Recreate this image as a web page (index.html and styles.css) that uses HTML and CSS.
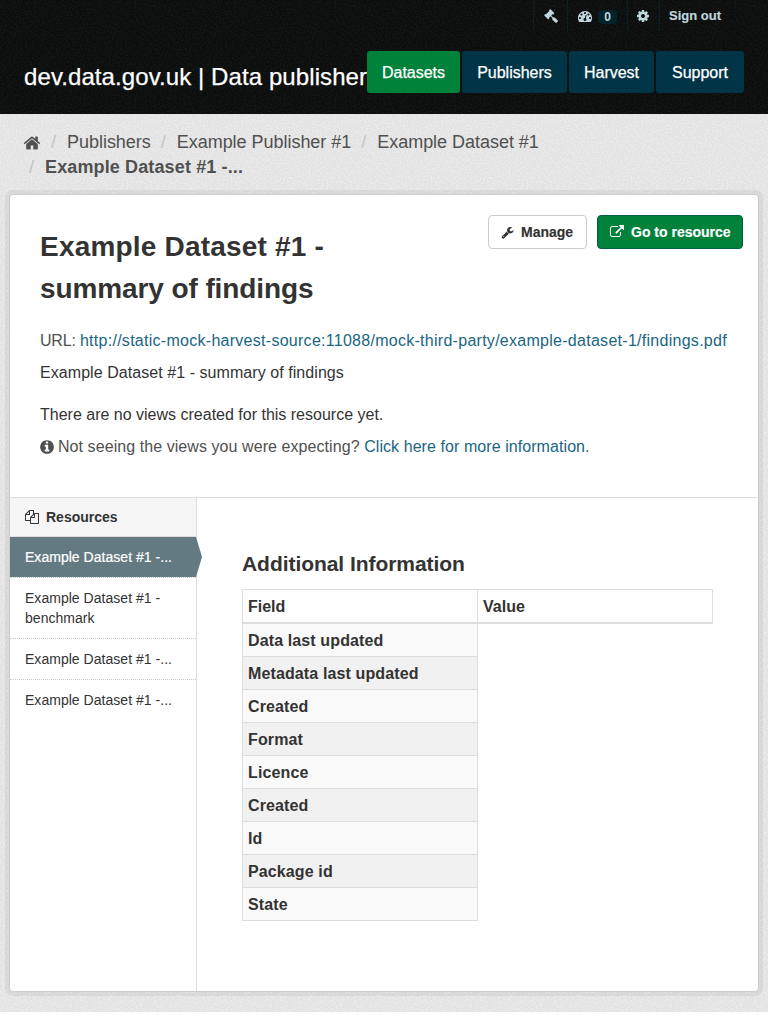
FILE: index.html
```html
<!DOCTYPE html>
<html lang="en">
<head>
<meta charset="utf-8">
<title>Example Dataset #1 - summary of findings</title>
<link rel="stylesheet" href="styles.css">
</head>
<body>
<svg class="defs" aria-hidden="true">
  <symbol id="gavel" viewBox="0 0 1792 1792"><path d="M1771 1536q0 53-37 90l-107 108q-39 37-91 37-53 0-90-37l-363-364q-38-36-38-90 0-53 43-96l-256-256-126 126q-14 14-34 14t-34-14q2 2 12.5 12t12.5 13 10 11.5 10 13.5 6 13.5 5.5 16.5 1.5 18q0 38-28 68-3 3-16.5 18t-19 20.5-18.5 16.5-22 15.5-22 9-26 4.5q-40 0-68-28l-408-408q-28-28-28-68 0-13 4.5-26t9-22 15.500-22 16.500-18.500 20.500-19 18-16.500q30-28 68-28 10 0 18 1.500t16.500 5.500 13.500 6 13.500 10 11.500 10 13 12.500 12 12.500q-14-14-14-34t14-34l348-348q14-14 34-14t34 14q-2-2-12.500-12t-12.500-13-10-11.500-10-13.500-6-13.500-5.500-16.500-1.500-18q0-38 28-68 3-3 16.500-18t19-20.500 18.500-16.500 22-15.500 22-9 26-4.500q40 0 68 28l408 408q28 28 28 68 0 13-4.500 26t-9 22-15.500 22-16.500 18.500-20.500 19-18 16.500q-30 28-68 28-10 0-18-1.500t-16.500-5.500-13.500-6-13.500-10-11.500-10-13-12.500-12-12.500q14 14 14 34t-14 34l-126 126 256 256q43-43 96-43 52 0 91 37l363 363q37 39 37 91z"/></symbol>
  <symbol id="gauge" viewBox="0 0 1792 1792"><path d="M384 1152q0-53-37.500-90.500t-90.500-37.500-90.500 37.500-37.500 90.500 37.500 90.500 90.500 37.500 90.500-37.500 37.500-90.500zm192-448q0-53-37.500-90.500t-90.500-37.500-90.500 37.500-37.500 90.500 37.500 90.500 90.500 37.500 90.500-37.500 37.500-90.500zm428 481l101-382q6-26-7.500-48.500t-38.500-29.500-48 6.500-30 39.500l-101 382q-60 5-107 43.500t-63 98.500q-20 77 20 146t117 89 146-20 89-117q16-60-6-117t-72-91zm660-33q0-53-37.500-90.500t-90.500-37.500-90.500 37.500-37.500 90.500 37.500 90.500 90.500 37.500 90.500-37.500 37.500-90.500zm-640-640q0-53-37.500-90.500t-90.500-37.500-90.500 37.500-37.500 90.500 37.500 90.500 90.500 37.500 90.500-37.500 37.500-90.500zm448 192q0-53-37.500-90.500t-90.500-37.500-90.500 37.500-37.500 90.500 37.500 90.500 90.500 37.500 90.500-37.500 37.500-90.500zm320 448q0 261-141 483-19 29-54 29h-1402q-35 0-54-29-141-221-141-483 0-182 71-348t191-286 286-191 348-71 348 71 286 191 191 286 71 348z"/></symbol>
  <symbol id="cog" viewBox="0 0 1792 1792"><path d="M1152 896q0-106-75-181t-181-75-181 75-75 181 75 181 181 75 181-75 75-181zm512-109v222q0 12-8 23t-20 13l-185 28q-19 54-39 91 35 50 107 138 10 12 10 25t-9 23q-27 37-99 108t-94 71q-12 0-26-9l-138-108q-44 23-91 38-16 136-29 186-7 28-36 28h-222q-14 0-24.500-8.500t-11.500-21.500l-28-184q-49-16-90-37l-141 107q-10 9-25 9-14 0-25-11-126-114-165-168-7-10-7-23 0-12 8-23 15-21 51-66.500t54-70.500q-27-50-41-99l-183-27q-13-2-21-12.500t-8-23.500v-222q0-12 8-23t19-13l186-28q14-46 39-92-40-57-107-138-10-12-10-24 0-10 9-23 26-36 98.500-107.500t94.500-71.500q13 0 26 10l138 107q44-23 91-38 16-136 29-186 7-28 36-28h222q14 0 24.500 8.500t11.500 21.500l28 184q49 16 90 37l142-107q9-9 24-9 13 0 25 10 129 119 165 170 7 8 7 22 0 12-8 23-15 21-51 66.500t-54 70.500q26 50 41 98l183 28q13 2 21 12.500t8 23.500z"/></symbol>
  <symbol id="home" viewBox="0 0 1792 1792"><path d="M1472 992v480q0 26-19 45t-45 19h-384v-384h-256v384h-384q-26 0-45-19t-19-45v-480q0-1 .5-3t.5-3l575-474 575 474q1 2 1 6zm223-69l-62 74q-8 9-21 11h-3q-13 0-21-7l-692-577-692 577q-12 8-24 7-13-2-21-11l-62-74q-8-10-7-23.500t11-21.500l719-599q32-26 76-26t76 26l244 204v-195q0-14 9-23t23-9h192q14 0 23 9t9 23v408l219 182q10 8 11 21.500t-7 23.500z"/></symbol>
  <symbol id="wrench" viewBox="0 0 1792 1792"><path d="M448 1472q0-26-19-45t-45-19-45 19-19 45 19 45 45 19 45-19 19-45zm644-420l-682 682q-37 37-90 37-52 0-91-37l-106-108q-38-36-38-90 0-53 38-91l681-681q39 98 114.500 173.500t173.500 114.500zm634-435q0 39-23 106-47 134-164.500 217.500t-258.500 83.500q-185 0-316.500-131.500t-131.500-316.500 131.500-316.500 316.500-131.500q58 0 121.500 16.500t107.500 46.500q16 11 16 28t-16 28l-293 169v224l193 107q5-3 79-48.500t135.500-81 70.500-35.500q15 0 23.500 10t8.500 25z"/></symbol>
  <symbol id="external" viewBox="0 0 1792 1792"><path d="M1408 928v320q0 119-84.500 203.500t-203.500 84.500h-832q-119 0-203.500-84.500t-84.500-203.500v-832q0-119 84.500-203.500t203.500-84.500h704q14 0 23 9t9 23v64q0 14-9 23t-23 9h-704q-66 0-113 47t-47 113v832q0 66 47 113t113 47h832q66 0 113-47t47-113v-320q0-14 9-23t23-9h64q14 0 23 9t9 23zm384-864v512q0 26-19 45t-45 19-45-19l-176-176-652 652q-10 10-23 10t-23-10l-114-114q-10-10-10-23t10-23l652-652-176-176q-19-19-19-45t19-45 45-19h512q26 0 45 19t19 45z"/></symbol>
  <symbol id="info" viewBox="0 0 1792 1792"><path d="M1152 1376v-160q0-14-9-23t-23-9h-96v-512q0-14-9-23t-23-9h-320q-14 0-23 9t-9 23v160q0 14 9 23t23 9h96v320h-96q-14 0-23 9t-9 23v160q0 14 9 23t23 9h448q14 0 23-9t9-23zm-128-896v-160q0-14-9-23t-23-9h-192q-14 0-23 9t-9 23v160q0 14 9 23t23 9h192q14 0 23-9t9-23zm640 416q0 209-103 385.500t-279.500 279.500-385.500 103-385.500-103-279.500-279.500-103-385.500 103-385.500 279.500-279.500 385.500-103 385.500 103 279.500 279.500 103 385.500z"/></symbol>
  <symbol id="files" viewBox="0 0 1792 1792"><path d="M1696 384q40 0 68 28t28 68v1216q0 40-28 68t-68 28h-960q-40 0-68-28t-28-68v-288h-544q-40 0-68-28t-28-68v-672q0-40 20-88t48-76l408-408q28-28 76-48t88-20h416q40 0 68 28t28 68v328q68-40 128-40h416zm-544 213l-299 299h299v-299zm-640-384l-299 299h299v-299zm196 647l316-316v-416h-384v416q0 40-28 68t-68 28h-416v640h512v-256q0-40 20-88t48-76zm956 804v-1152h-384v416q0 40-28 68t-68 28h-416v640h896z"/></symbol>
</svg>

<header class="masthead">
  <ul class="account">
    <li><a href="#" aria-label="Admin"><svg class="icon icon-gavel"><use href="#gavel"/></svg></a></li>
    <li class="item-dash"><a href="#" aria-label="Dashboard"><svg class="icon icon-gauge"><use href="#gauge"/></svg><span class="badge">0</span></a></li>
    <li class="item-cog"><a href="#" aria-label="Settings"><svg class="icon icon-cog"><use href="#cog"/></svg></a></li>
    <li class="item-out"><a href="#">Sign out</a></li>
  </ul>
  <div class="brandbar">
    <a class="brand" href="#">dev.data.gov.uk | Data publisher</a>
    <nav class="nav">
      <a class="nav-link nav-datasets" href="#">Datasets</a>
      <a class="nav-link nav-publishers" href="#">Publishers</a>
      <a class="nav-link nav-harvest" href="#">Harvest</a>
      <a class="nav-link nav-support" href="#">Support</a>
    </nav>
  </div>
</header>

<div class="page">
  <ol class="breadcrumb">
    <li><a href="#" aria-label="Home"><svg class="icon icon-home"><use href="#home"/></svg></a></li>
    <li><a href="#">Publishers</a></li>
    <li><a href="#">Example Publisher #1</a></li>
    <li><a href="#">Example Dataset #1</a></li>
    <li class="current"><a href="#">Example Dataset #1 -...</a></li>
  </ol>

  <main class="panel">
    <section class="resource">
      <div class="resource-head">
        <h1><span class="title-lead">Example Dataset #1 -</span> summary of findings</h1>
        <div class="actions">
          <a class="btn btn-manage" href="#"><svg class="icon icon-btn"><use href="#wrench"/></svg><span>Manage</span></a>
          <a class="btn btn-primary" href="#"><svg class="icon icon-btn icon-ext"><use href="#external"/></svg><span>Go to resource</span></a>
        </div>
      </div>
      <p class="muted url">URL: <a href="#">http://static-mock-harvest-source:11088/mock-third-party/example-dataset-1/findings.pdf</a></p>
      <p class="description">Example Dataset #1 - summary of findings</p>
      <p class="noviews">There are no views created for this resource yet.</p>
      <p class="muted hint"><svg class="icon icon-info"><use href="#info"/></svg><span>Not seeing the views you were expecting? <a href="#">Click here for more information.</a></span></p>
    </section>

    <div class="columns">
      <aside class="sidebar">
        <h2><svg class="icon icon-files"><use href="#files"/></svg>Resources</h2>
        <ul>
          <li class="active"><a href="#">Example Dataset #1 -...</a></li>
          <li><a href="#">Example Dataset #1 - benchmark</a></li>
          <li><a href="#">Example Dataset #1 -...</a></li>
          <li><a href="#">Example Dataset #1 -...</a></li>
        </ul>
      </aside>
      <section class="info">
        <h2>Additional Information</h2>
        <table>
          <thead><tr><th>Field</th><th>Value</th></tr></thead>
          <tbody>
            <tr><th>Data last updated</th></tr>
            <tr><th>Metadata last updated</th></tr>
            <tr><th>Created</th></tr>
            <tr><th>Format</th></tr>
            <tr><th>Licence</th></tr>
            <tr><th>Created</th></tr>
            <tr><th>Id</th></tr>
            <tr><th>Package id</th></tr>
            <tr><th>State</th></tr>
          </tbody>
        </table>
      </section>
    </div>
  </main>
</div>
</body>
</html>
```
FILE: styles.css
```css
:root {
  --grain: url("data:image/svg+xml,%3Csvg xmlns='http://www.w3.org/2000/svg' width='100' height='100'%3E%3Cfilter id='n' x='0' y='0' width='1' height='1'%3E%3CfeTurbulence type='fractalNoise' baseFrequency='.55' numOctaves='2' stitchTiles='stitch'/%3E%3CfeColorMatrix values='0 0 0 0 1 0 0 0 0 1 0 0 0 0 1 2 0 0 0 -.75'/%3E%3C/filter%3E%3Crect width='100' height='100' filter='url(%23n)' opacity='.45'/%3E%3C/svg%3E");
  --grain-dark: url("data:image/svg+xml,%3Csvg xmlns='http://www.w3.org/2000/svg' width='100' height='100'%3E%3Cfilter id='n' x='0' y='0' width='1' height='1'%3E%3CfeTurbulence type='fractalNoise' baseFrequency='.55' numOctaves='2' stitchTiles='stitch'/%3E%3CfeColorMatrix values='0 0 0 0 1 0 0 0 0 1 0 0 0 0 1 2 0 0 0 -.75'/%3E%3C/filter%3E%3Crect width='100' height='100' filter='url(%23n)' opacity='.05'/%3E%3C/svg%3E");
}
* { box-sizing: border-box; }
body {
  margin: 0;
  background: #fff;
  color: #333;
  font: 16px/24px "Liberation Sans", Arial, sans-serif;
}
a { color: #1a6682; text-decoration: none; }
ul, ol { list-style: none; margin: 0; padding: 0; }
h1, h2, p { margin: 0; }
.defs { display: none; }
.icon { display: block; flex: none; width: 14px; height: 14px; fill: currentColor; }

.masthead { height: 114px; background: var(--grain-dark), #0b0c0c; }
.account { display: flex; justify-content: flex-end; height: 31px; padding-right: 37px; }
.account li { width: 34px; border-left: 1px solid #082127; }
.account .item-dash { width: 60px; }
.account .item-cog { width: 32px; }
.account .item-out { width: 72px; }
.account a {
  display: flex;
  align-items: center;
  height: 31px;
  padding-left: 10px;
  color: #c0d7de;
  font-size: 13px;
  font-weight: bold;
  white-space: nowrap;
}
.account .item-out a { padding-left: 9px; -webkit-text-stroke: .15px #c0d7de; }
.icon-gavel { width: 14px; height: 14px; }
.icon-gauge { width: 14px; height: 14px; }
.account .item-cog a { padding-left: 8px; }
.badge {
  width: 19px;
  height: 14px;
  margin: 3px 0 0 6px;
  border-radius: 4px;
  background: #03222b;
  font-size: 12px;
  line-height: 14px;
  text-align: center;
}
.brandbar { display: flex; padding: 20px 24px 0; }
.brand {
  width: 343px;
  padding-top: 6px;
  color: #fff;
  font-size: 24px;
  line-height: 40px;
  letter-spacing: .09px;
  white-space: nowrap;
  -webkit-text-stroke: .25px #fff;
}
.nav { display: flex; gap: 2px; }
.nav-link {
  height: 42px;
  border-radius: 3px;
  background: #003447;
  color: #fff;
  line-height: 43px;
  text-align: center;
  -webkit-text-stroke: .25px #fff;
}
.nav-datasets { width: 93px; background: #00823b; }
.nav-publishers { width: 105px; }
.nav-harvest { width: 85px; }
.nav-support { width: 88px; }

.page { height: 898px; padding: 16px 9px 0; background: var(--grain), #e2e2e2; }
.breadcrumb {
  display: flex;
  flex-wrap: wrap;
  height: 64px;
  padding: 0 15px;
  font-size: 18px;
  line-height: 25px;
  letter-spacing: -.03px;
  align-content: flex-start;
}
.breadcrumb li { display: flex; align-items: center; height: 25px; }
.breadcrumb li + li::before { content: "/"; width: 5px; margin: 0 11px 0 10px; color: #c4c4c4; }
.breadcrumb li.current::before { margin-left: 5px; letter-spacing: 0; }
.breadcrumb a { color: #505050; }
.breadcrumb .current { font-weight: bold; letter-spacing: .13px; }
.breadcrumb .current::before { font-weight: normal; }
.icon-home { width: 18px; height: 18px; margin: 0 0 0 -1px; }

.panel {
  height: 798px;
  border: 1px solid #ccc;
  border-radius: 4px;
  background: #fff;
  box-shadow: 0 0 0 4px rgba(0, 0, 0, .05);
}
.resource { height: 303px; padding: 20px 15px 0 30px; border-bottom: 1px solid #ddd; }
.resource-head { display: flex; justify-content: space-between; height: 114px; }
h1 { width: 330px; padding-top: 11px; font-size: 28px; line-height: 42px; letter-spacing: -.1px; }
.title-lead { letter-spacing: .2px; }
.actions { display: flex; gap: 10px; }
.btn {
  display: flex;
  align-items: center;
  height: 34px;
  padding-left: 12px;
  border: 1px solid #ccc;
  border-radius: 4px;
  color: #333;
  font-size: 14px;
  font-weight: bold;
  white-space: nowrap;
}
.btn span { -webkit-text-stroke: .15px currentColor; }
.btn-manage { width: 99px; }
.btn-primary { width: 146px; border-color: #005c4b; background: #00823b; color: #fff; }
.icon-btn { width: 13px; height: 13px; margin-right: 7px; }
.icon-ext { width: 14px; height: 14px; }
.muted { color: #505050; }
.url { white-space: nowrap; letter-spacing: -.2px; }
.url a { letter-spacing: .275px; }
.description { padding-top: 8px; letter-spacing: .06px; }
.noviews { padding-top: 18px; }
.hint { display: flex; align-items: center; padding-top: 8px; letter-spacing: .07px; }
.icon-info { width: 16px; height: 16px; margin: 0 3px 0 -1px; }

.columns { display: flex; height: 493px; }
.sidebar { width: 187px; border-right: 1px solid #ddd; }
.sidebar h2 {
  display: flex;
  align-items: center;
  height: 39px;
  padding-left: 15px;
  border-bottom: 1px solid #ddd;
  background: #f6f6f6;
  font-size: 14px;
}
.icon-files { margin-right: 7px; }
.sidebar li { border-bottom: 1px dotted #ccc; }
.sidebar li:last-child { border-bottom: 0; }
.sidebar li a { display: block; padding: 10px 15px; color: #333; font-size: 14px; line-height: 20px; letter-spacing: .03px; }
.sidebar .active a {
  width: 192px;
  background: #637a82;
  color: #fff;
  clip-path: polygon(0 0, 186px 0, 192px 50%, 186px 100%, 0 100%);
  -webkit-text-stroke: .2px #fff;
}
.info { padding: 52px 0 0 45px; }
.info h2 { height: 39px; font-size: 21px; line-height: 27px; letter-spacing: -.05px; }
table { width: 471px; border-collapse: collapse; table-layout: fixed; }
th { height: 33px; padding: 5px 5px 3px; border: 1px solid #ddd; line-height: 24px; letter-spacing: .12px; text-align: left; }
thead th { border-bottom-width: 2px; letter-spacing: 0; }
tbody tr:nth-child(odd) th { background: #f9f9f9; }
tbody tr:nth-child(even) th { background: #f1f1f1; }
```
